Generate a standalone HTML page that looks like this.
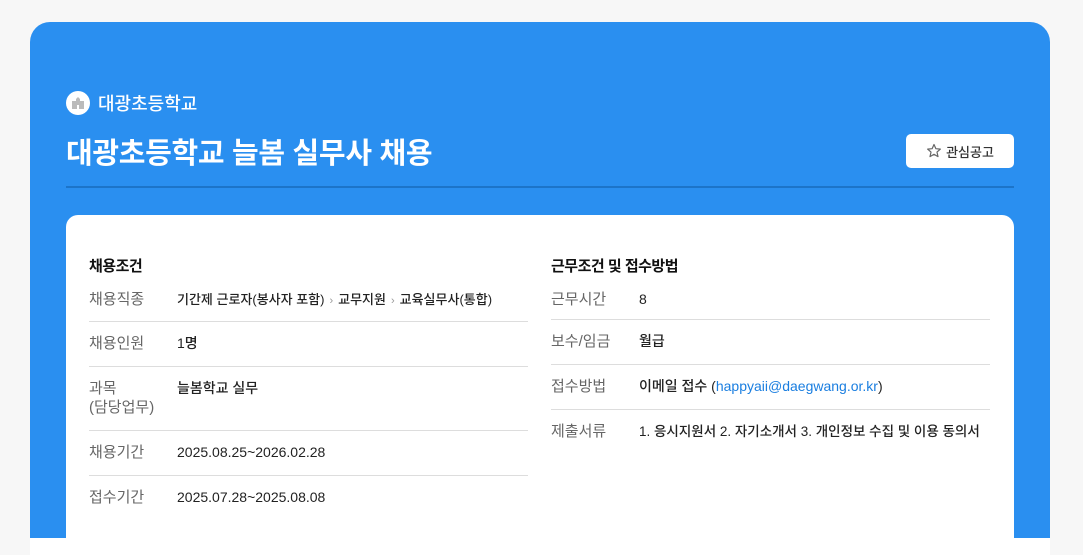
<!DOCTYPE html><html><head><meta charset="utf-8"><style>
*{margin:0;padding:0;box-sizing:border-box}
html,body{width:1083px;height:555px;overflow:hidden}
body{background:#f7f7f7;font-family:"Liberation Sans","Noto Sans CJK KR",sans-serif;position:relative}
.blue{position:absolute;left:30px;top:22px;width:1020px;height:560px;background:#2a8ff0;border-radius:20px}
.white{position:absolute;left:30px;top:538px;width:1020px;height:30px;background:#fff}
.org{position:absolute;left:66px;top:90px;color:#fff;font-size:18px;font-weight:500;display:flex;align-items:center}
.org .ic{width:24px;height:24px;border-radius:50%;background:#fff;margin-right:8px;display:flex;align-items:center;justify-content:center}
h1{position:absolute;left:66px;top:130px;color:#fff;font-size:29px;font-weight:bold;letter-spacing:-0.3px}
.btn{position:absolute;left:906px;top:134px;width:108px;height:34px;background:#fff;border-radius:5px;font-size:13px;font-weight:500;color:#333;display:flex;align-items:center;justify-content:center;gap:4px}
.line{position:absolute;left:66px;top:186px;width:948px;height:2px;background:#1c74c9}
.card{position:absolute;left:66px;top:215px;width:948px;height:340px;background:#fff;border-radius:12px}
.col{position:absolute;top:40px}
.col h3{font-size:15px;font-weight:bold;color:#111;margin-bottom:2px;letter-spacing:-0.5px}
.row{display:flex;border-bottom:1px solid #ddd;padding:12px 0 13px}
.row.f{padding-bottom:10px}
.row:last-child{border-bottom:none}
.k{width:88px;font-size:15px;color:#666;line-height:19px;flex-shrink:0}
.v{font-size:14px;color:#222;line-height:19px;font-weight:500}
.v a{color:#1a7ee0;text-decoration:none;font-weight:400}
.g{color:#999;font-size:11px;margin:0 5px}
</style></head><body>
<div class="blue"></div><div class="white"></div>
<div class="org"><span class="ic"><svg width="14" height="14" viewBox="0 0 14 14"><path d="M7 1l2 2v2h4v8H1V5h4V3z" fill="#bbb"/><rect x="6" y="9" width="2" height="4" fill="#fff"/></svg></span>대광초등학교</div>
<h1>대광초등학교 늘봄 실무사 채용</h1>
<div class="btn"><svg width="16" height="16" viewBox="0 0 16 16"><path d="M8 1.5l1.9 4.2 4.5.4-3.4 3 1 4.5L8 11.3 4 13.6l1-4.5-3.4-3 4.5-.4z" fill="none" stroke="#666" stroke-width="1.2" stroke-linejoin="round"/></svg>관심공고</div>
<div class="line"></div>
<div class="card">
<div class="col" style="left:23px;width:439px">
<h3>채용조건</h3>
<div class="row f"><div class="k">채용직종</div><div class="v" style="font-size:13px">기간제 근로자(봉사자 포함)<span class="g">›</span>교무지원<span class="g">›</span>교육실무사(통합)</div></div>
<div class="row"><div class="k">채용인원</div><div class="v">1명</div></div>
<div class="row"><div class="k">과목<br>(담당업무)</div><div class="v">늘봄학교 실무</div></div>
<div class="row"><div class="k">채용기간</div><div class="v">2025.08.25~2026.02.28</div></div>
<div class="row"><div class="k">접수기간</div><div class="v">2025.07.28~2025.08.08</div></div>
</div>
<div class="col" style="left:485px;width:439px">
<h3>근무조건 및 접수방법</h3>
<div class="row f"><div class="k">근무시간</div><div class="v">8</div></div>
<div class="row"><div class="k">보수/임금</div><div class="v">월급</div></div>
<div class="row"><div class="k">접수방법</div><div class="v">이메일 접수 (<a>happyaii@daegwang.or.kr</a>)</div></div>
<div class="row"><div class="k">제출서류</div><div class="v" style="font-size:13.5px">1. 응시지원서 2. 자기소개서 3. 개인정보 수집 및 이용 동의서</div></div>
</div>
</div>
</body></html>
